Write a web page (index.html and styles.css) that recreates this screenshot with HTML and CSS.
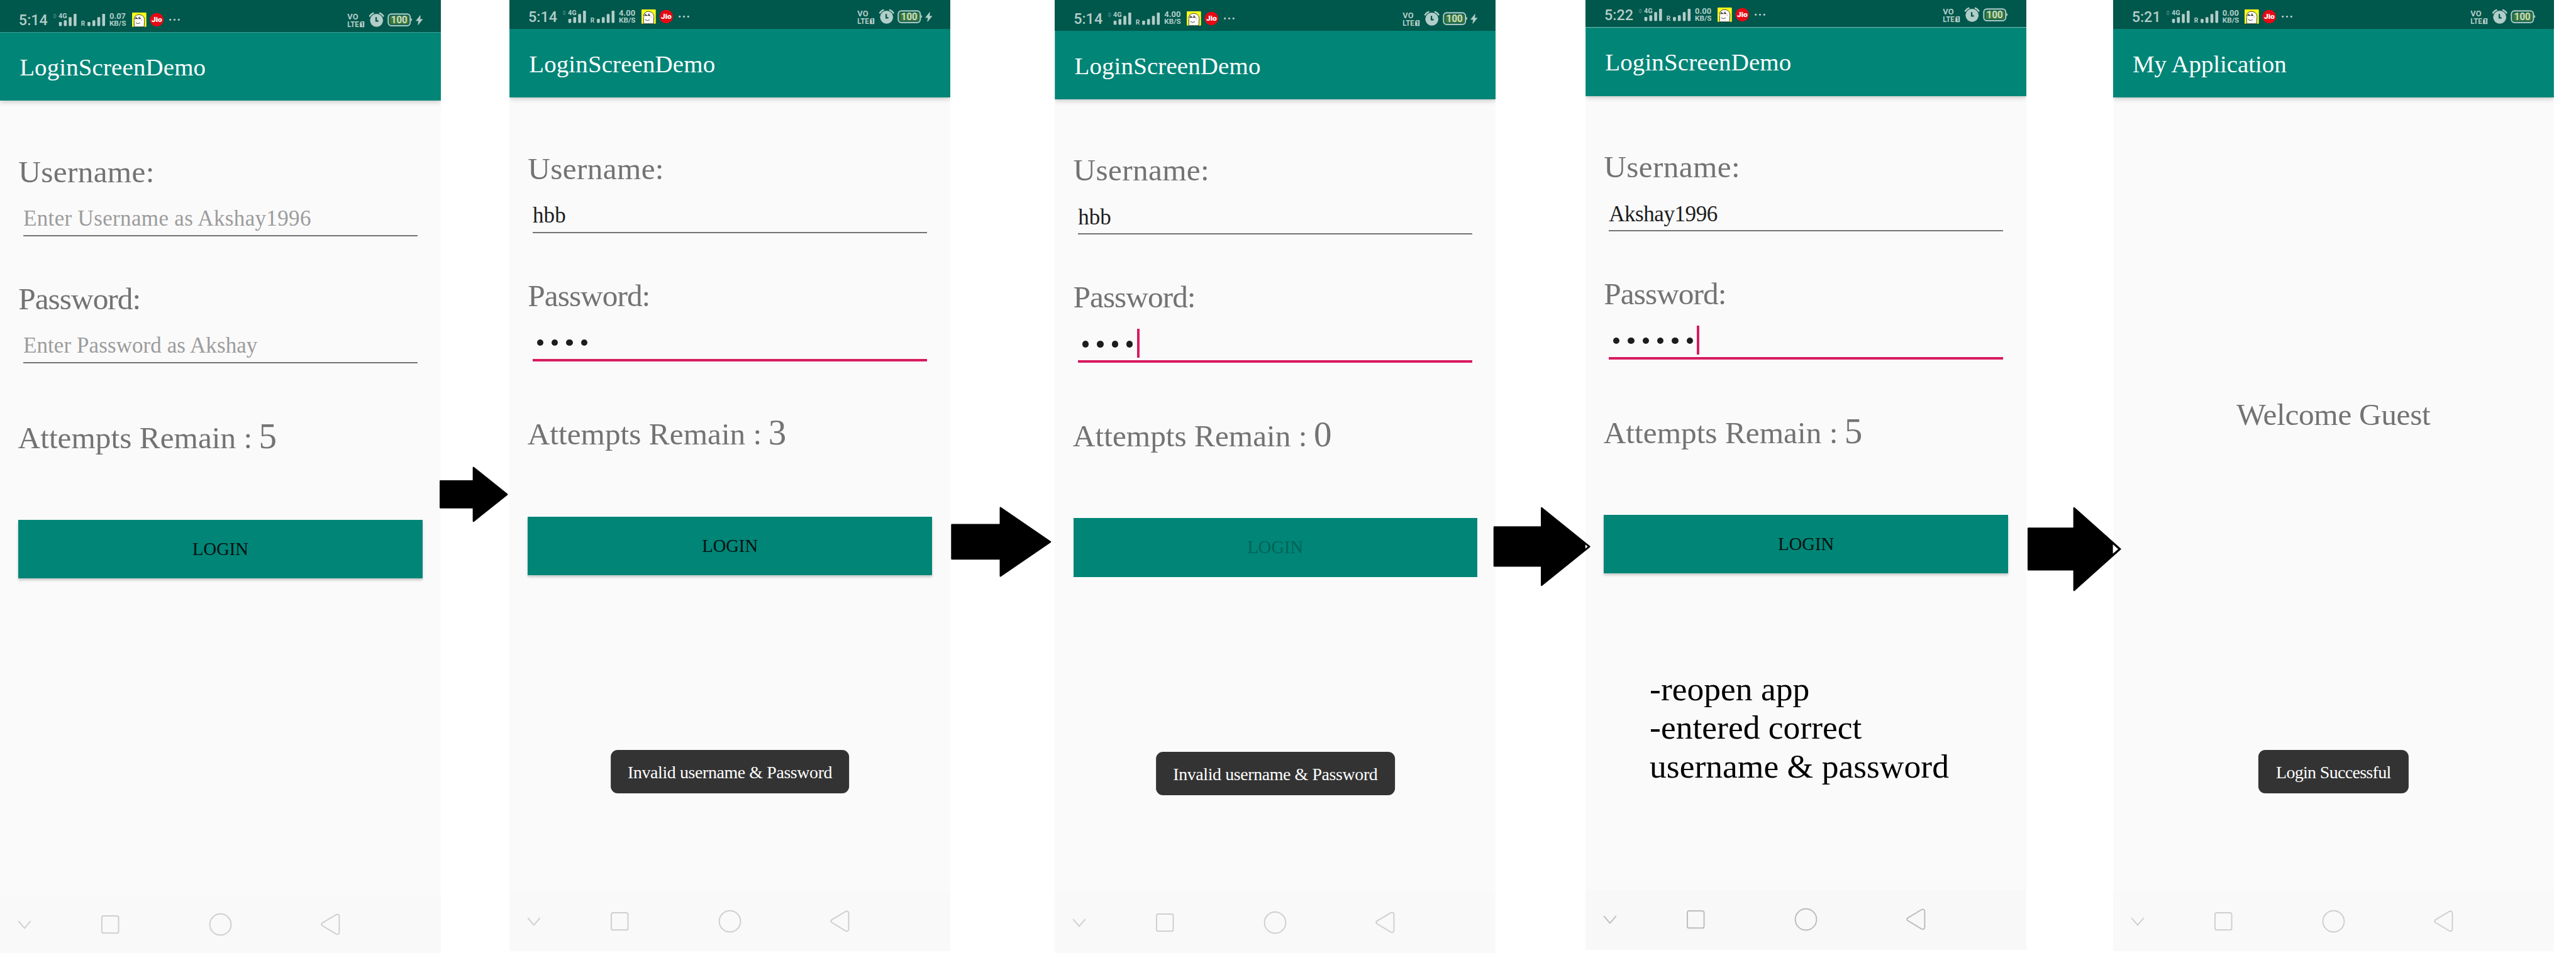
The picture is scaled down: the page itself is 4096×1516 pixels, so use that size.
FILE: index.html
```html
<!DOCTYPE html>
<html lang="en">
<head>
<meta charset="utf-8">
<title>LoginScreenDemo</title>
<link rel="stylesheet" href="styles.css">
</head>
<body>
<svg class="defs" aria-hidden="true">
  <defs>
    <g id="signal">
      <path class="dim" d="M134 33.500l5 5h-10zM134 45.500l-5-5h10z"/>
      <rect x="144" y="54" width="7" height="10" rx="2"/><rect x="156" y="50" width="7" height="14" rx="2"/>
      <rect x="168" y="42" width="7" height="22" rx="2"/><rect x="180" y="34" width="7" height="30" rx="2"/>
      <rect x="214" y="54" width="7" height="10" rx="2"/><rect x="226" y="50" width="7" height="14" rx="2"/>
      <rect x="238" y="42" width="7" height="22" rx="2"/><rect x="250" y="34" width="7" height="30" rx="2"/>
    </g>
    <g id="apps">
      <rect x="323" y="31" width="35" height="35" rx="1.500" fill="#fcfc1c"/>
      <path d="M328 66V52C327 41 332 36.200 340 36.200S353.500 41 353.500 49L352.500 66z" fill="#fff" stroke="#111" stroke-width="1.200"/>
      <circle cx="329.500" cy="49" r="1.800" fill="#f9cfcf"/><circle cx="346.500" cy="49.500" r="1.800" fill="#f9b5b5"/>
      <path d="M330 46q3-4 6.500 0zM338 46q3-4 6.500 0zM331 43l3-1M338.500 43l4-1.500M332 56q5 4.500 11 .3" fill="none" stroke="#111" stroke-width="1.200"/>
      <path d="M333 44h2.500v2h-2.500zM341 44h2.500v2h-2.500z" fill="#111"/>
      <circle cx="383.500" cy="48.500" r="16.500" fill="#e60914"/>
      <circle cx="416.500" cy="48.500" r="2.500"/><circle cx="427" cy="48.500" r="2.500"/><circle cx="437.500" cy="48.500" r="2.500"/>
    </g>
    <g id="system">
      <path d="M885 52.500h8v14.500h-11v-11z"/>
      <circle cx="923" cy="50" r="16"/>
      <path d="M906.500 39.500q3-4.500 8.500-7M939.500 39.500q-3-4.500-8.500-7" fill="none" stroke="#b2cdc9" stroke-width="3.800" stroke-linecap="round"/>
      <path d="M922 42v9.500h5.500" fill="none" stroke="#00574b" stroke-width="3.500"/>
      <rect x="951.700" y="34.700" width="53.600" height="28.600" rx="7.500" fill="none" stroke="#a6c5c0" stroke-width="3.400"/>
      <path d="M1007 45q3 0 3 3.500t-3 3.500z"/>
      <rect x="956" y="39" width="45.500" height="20" rx="2" fill="#3f7a38"/>
    </g>
    <path id="bolt" d="M1029.500 38l-.8 9.500h6.300l-11 13.500 1.300-10h-6.300z" stroke="#b2cdc9" stroke-linejoin="round"/>
    <g id="nav">
      <path d="M45 2257l15 17.500 15-17.500"/>
      <rect x="249.500" y="2244.500" width="41" height="42" rx="4.500"/>
      <circle cx="540" cy="2265.500" r="26"/>
      <path d="M789 2262l34-20.500q8-3 8 4v39q0 7-8 4l-34-20.500q-3-3 0-6z"/>
    </g>
  </defs>
</svg>

<main class="flow">
  <section class="phone">
    <header class="status">
      <span class="time">5:14</span>
      <svg class="i-signal" viewBox="129 31 139 48"><use href="#signal"/><text class="net" x="143" y="45.500" textLength="21" lengthAdjust="spacingAndGlyphs">4G</text><text class="net" x="198" y="64" textLength="10" lengthAdjust="spacingAndGlyphs">R</text></svg>
      <span class="speed">0.07<small>KB/S</small></span>
      <svg class="i-apps" viewBox="323 31 120 48"><use href="#apps"/><text class="jio" x="370.800" y="54" textLength="26" lengthAdjust="spacingAndGlyphs">Jio</text></svg>
      <svg class="i-system" viewBox="851 31 161 48"><use href="#system"/><text class="vo" x="851.500" y="47.700" textLength="26.500" lengthAdjust="spacingAndGlyphs">VO</text><text class="vo" x="851.500" y="66.500" textLength="28.500" lengthAdjust="spacingAndGlyphs">LTE</text><text class="cut" x="884" y="64.500">1</text><text class="charge" x="958.500" y="57.600" textLength="40" lengthAdjust="spacingAndGlyphs">100</text></svg>
      <svg class="i-bolt" viewBox="1012 31 24 48"><use href="#bolt"/></svg>
    </header>
    <h1 class="appbar">LoginScreenDemo</h1>
    <div class="form">
      <div class="label user">Username:</div>
      <div class="field"><span class="hint">Enter Username as Akshay1996</span></div>
      <div class="label pass">Password:</div>
      <div class="field"><span class="hint tight">Enter Password as Akshay</span></div>
      <div class="attempts"><span>Attempts Remain :</span><b>5</b></div>
      <div class="button">LOGIN</div>
    </div>
    <svg class="nav" viewBox="0 2192 1080 147"><use href="#nav"/></svg>
  </section>

  <svg class="arrow gap-1" viewBox="1080 0 168 2335"><path d="M1079 1179h81v-33l82 65.500-82 65.500v-33h-81z"/></svg>

  <section class="phone up-8">
    <header class="status">
      <span class="time">5:14</span>
      <svg class="i-signal" viewBox="129 31 139 48"><use href="#signal"/><text class="net" x="143" y="45.500" textLength="21" lengthAdjust="spacingAndGlyphs">4G</text><text class="net" x="198" y="64" textLength="10" lengthAdjust="spacingAndGlyphs">R</text></svg>
      <span class="speed">4.00<small>KB/S</small></span>
      <svg class="i-apps" viewBox="323 31 120 48"><use href="#apps"/><text class="jio" x="370.800" y="54" textLength="26" lengthAdjust="spacingAndGlyphs">Jio</text></svg>
      <svg class="i-system" viewBox="851 31 161 48"><use href="#system"/><text class="vo" x="851.500" y="47.700" textLength="26.500" lengthAdjust="spacingAndGlyphs">VO</text><text class="vo" x="851.500" y="66.500" textLength="28.500" lengthAdjust="spacingAndGlyphs">LTE</text><text class="cut" x="884" y="64.500">1</text><text class="charge" x="958.500" y="57.600" textLength="40" lengthAdjust="spacingAndGlyphs">100</text></svg>
      <svg class="i-bolt" viewBox="1012 31 24 48"><use href="#bolt"/></svg>
    </header>
    <h1 class="appbar">LoginScreenDemo</h1>
    <div class="form">
      <div class="label user">Username:</div>
      <div class="field"><span>hbb</span></div>
      <div class="label pass">Password:</div>
      <div class="field focus"><i></i><i></i><i></i><i></i></div>
      <div class="attempts"><span>Attempts Remain :</span><b>3</b></div>
      <div class="button">LOGIN</div>
    </div>
    <div class="toast">Invalid username &amp; Password</div>
    <svg class="nav" viewBox="0 2192 1080 147"><use href="#nav"/></svg>
  </section>

  <svg class="arrow gap-2" viewBox="2328 0 256 2335"><path d="M2332 1286h119v-41.500l122 83.500-122 83.500v-42h-119z"/></svg>

  <section class="phone up-4">
    <header class="status">
      <span class="time">5:14</span>
      <svg class="i-signal" viewBox="129 31 139 48"><use href="#signal"/><text class="net" x="143" y="45.500" textLength="21" lengthAdjust="spacingAndGlyphs">4G</text><text class="net" x="198" y="64" textLength="10" lengthAdjust="spacingAndGlyphs">R</text></svg>
      <span class="speed">4.00<small>KB/S</small></span>
      <svg class="i-apps" viewBox="323 31 120 48"><use href="#apps"/><text class="jio" x="370.800" y="54" textLength="26" lengthAdjust="spacingAndGlyphs">Jio</text></svg>
      <svg class="i-system" viewBox="851 31 161 48"><use href="#system"/><text class="vo" x="851.500" y="47.700" textLength="26.500" lengthAdjust="spacingAndGlyphs">VO</text><text class="vo" x="851.500" y="66.500" textLength="28.500" lengthAdjust="spacingAndGlyphs">LTE</text><text class="cut" x="884" y="64.500">1</text><text class="charge" x="958.500" y="57.600" textLength="40" lengthAdjust="spacingAndGlyphs">100</text></svg>
      <svg class="i-bolt" viewBox="1012 31 24 48"><use href="#bolt"/></svg>
    </header>
    <h1 class="appbar">LoginScreenDemo</h1>
    <div class="form">
      <div class="label user">Username:</div>
      <div class="field"><span>hbb</span></div>
      <div class="label pass">Password:</div>
      <div class="field focus"><i></i><i></i><i></i><i></i><em class="cursor"></em></div>
      <div class="attempts"><span>Attempts Remain :</span><b>0</b></div>
      <div class="button disabled">LOGIN</div>
    </div>
    <div class="toast">Invalid username &amp; Password</div>
    <svg class="nav" viewBox="0 2192 1080 147"><use href="#nav"/></svg>
  </section>

  <svg class="arrow gap-3" viewBox="3664 0 220 2335"><path d="M3661 1292h116v-47l117 94.500-117 94.500v-47h-116z"/><path class="tip" d="M3884 1334.500l6 5-6 5z"/></svg>

  <section class="phone up-12">
    <header class="status">
      <span class="time">5:22</span>
      <svg class="i-signal" viewBox="129 31 139 48"><use href="#signal"/><text class="net" x="143" y="45.500" textLength="21" lengthAdjust="spacingAndGlyphs">4G</text><text class="net" x="198" y="64" textLength="10" lengthAdjust="spacingAndGlyphs">R</text></svg>
      <span class="speed">0.00<small>KB/S</small></span>
      <svg class="i-apps" viewBox="323 31 120 48"><use href="#apps"/><text class="jio" x="370.800" y="54" textLength="26" lengthAdjust="spacingAndGlyphs">Jio</text></svg>
      <svg class="i-system" viewBox="851 31 161 48"><use href="#system"/><text class="vo" x="851.500" y="47.700" textLength="26.500" lengthAdjust="spacingAndGlyphs">VO</text><text class="vo" x="851.500" y="66.500" textLength="28.500" lengthAdjust="spacingAndGlyphs">LTE</text><text class="cut" x="884" y="64.500">1</text><text class="charge" x="958.500" y="57.600" textLength="40" lengthAdjust="spacingAndGlyphs">100</text></svg>
    </header>
    <h1 class="appbar">LoginScreenDemo</h1>
    <div class="form">
      <div class="label user">Username:</div>
      <div class="field"><span class="short-name">Akshay1996</span></div>
      <div class="label pass">Password:</div>
      <div class="field focus"><i></i><i></i><i></i><i></i><i></i><i></i><em class="cursor"></em></div>
      <div class="attempts"><span>Attempts Remain :</span><b>5</b></div>
      <div class="button">LOGIN</div>
      <p class="note">-reopen app<br>-entered correct<br>username &amp; password</p>
    </div>
    <svg class="nav dark" viewBox="0 2192 1080 147"><use href="#nav"/></svg>
  </section>

  <svg class="arrow gap-4" viewBox="4964 0 212 2335"><path d="M4969 1295h112v-50l113 100.500-113 101v-50.500h-112z"/><path class="tip" d="M5176 1334l13 11.500-13 11.500z"/></svg>

  <section class="phone up-8">
    <header class="status">
      <span class="time">5:21</span>
      <svg class="i-signal" viewBox="129 31 139 48"><use href="#signal"/><text class="net" x="143" y="45.500" textLength="21" lengthAdjust="spacingAndGlyphs">4G</text><text class="net" x="198" y="64" textLength="10" lengthAdjust="spacingAndGlyphs">R</text></svg>
      <span class="speed">0.00<small>KB/S</small></span>
      <svg class="i-apps" viewBox="323 31 120 48"><use href="#apps"/><text class="jio" x="370.800" y="54" textLength="26" lengthAdjust="spacingAndGlyphs">Jio</text></svg>
      <svg class="i-system" viewBox="851 31 161 48"><use href="#system"/><text class="vo" x="851.500" y="47.700" textLength="26.500" lengthAdjust="spacingAndGlyphs">VO</text><text class="vo" x="851.500" y="66.500" textLength="28.500" lengthAdjust="spacingAndGlyphs">LTE</text><text class="cut" x="884" y="64.500">1</text><text class="charge" x="958.500" y="57.600" textLength="40" lengthAdjust="spacingAndGlyphs">100</text></svg>
    </header>
    <h1 class="appbar plain">My Application</h1>
    <div class="form"><div class="welcome">Welcome Guest</div></div>
    <div class="toast short">Login Successful</div>
    <svg class="nav" viewBox="0 2192 1080 147"><use href="#nav"/></svg>
  </section>
</main>
</body>
</html>
```
FILE: styles.css
```css
/* 1rem = 100 device pixels of the phone screens */
html { font-size: 64.9129px; }
body {
  margin: 0;
  height: 1516px;
  overflow: hidden;
  background: #fff;
  font-family: "Liberation Serif", "Times New Roman", serif;
}
.defs { position: absolute; width: 0; height: 0; }
.flow { display: flex; align-items: flex-start; height: 23.39rem; }

/* phone shell */
.phone {
  --cut: 0rem;
  position: relative;
  flex: none;
  display: flex;
  flex-direction: column;
  width: 10.8rem;
  height: calc(23.39rem - var(--cut));
  background: #fafafa;
}
.up-4 { --cut: .04rem; }
.up-8 { --cut: .08rem; }
.up-12 { --cut: .12rem; }

/* status bar */
.status {
  flex: none;
  box-sizing: border-box;
  display: flex;
  align-items: flex-start;
  height: calc(.79rem - var(--cut));
  padding: calc(.31rem - var(--cut)) .44rem 0 .46rem;
  background: #00574b;
  color: #b2cdc9;
  fill: #b2cdc9;
  font-family: Roboto, sans-serif;
}
.status svg { flex: none; height: .48rem; overflow: visible; font-weight: 700; }
.time { width: .83rem; font-size: .36rem; line-height: .394rem; font-weight: 500; white-space: nowrap; }
.i-signal { width: 1.39rem; }
.speed { width: .55rem; padding-top: .015rem; font-size: .2rem; line-height: .165rem; font-weight: 700; white-space: nowrap; }
.speed small { display: block; font-size: .18rem; }
.i-apps { width: 1.2rem; }
.i-system { width: 1.61rem; margin-left: auto; }
.i-bolt { width: .24rem; }
.net { font-size: 18px; }
.vo { font-size: 20.5px; }
.dim { fill: #3b7f75; }
.jio { fill: #fff; font-size: 18px; font-weight: 900; }
.cut { fill: #00574b; font-size: 13px; }
.charge { fill: #c8dcc9; font-size: 24.5px; }

.appbar {
  flex: none;
  position: relative;
  height: 1.68rem;
  margin: 0;
  padding-left: .48rem;
  background: #008577;
  box-shadow: 0 .03rem .12rem rgba(0, 0, 0, .22);
  clip-path: inset(0 0 -.3rem 0);
  color: #fff;
  font-size: .6rem;
  font-weight: 400;
  letter-spacing: .002rem;
  line-height: 1.74rem;
}
.plain { letter-spacing: -.001rem; }

/* form */
.form { flex: 1; color: #737373; }
.label { padding-left: .45rem; font-size: .76rem; line-height: .9rem; }
.user { padding-top: 1.304rem; letter-spacing: .005rem; }
.pass { padding-top: 1.09rem; letter-spacing: -.015rem; }
.field {
  display: flex;
  align-items: center;
  box-sizing: border-box;
  width: 9.66rem;
  height: 1.12rem;
  margin-left: .57rem;
  padding: .4rem 0 .09rem;
  border-bottom: 2px solid #737373;
  color: #1d1d1d;
  font-size: .54rem;
  line-height: .6rem;
}
.hint { color: #9c9c9c; letter-spacing: .005rem; }
.tight { letter-spacing: .001rem; }
.short-name { letter-spacing: -.007rem; }
.focus {
  height: 1.15rem;
  margin-bottom: -.03rem;
  padding-left: .103rem;
  border-bottom: 4px solid #d81b60;
}
.focus i { width: .16rem; height: .16rem; margin: -.02rem .2rem 0 0; border-radius: 50%; background: #1d1d1d; }
.cursor { width: .06rem; height: .71rem; margin: -.07rem 0 0 -.1rem; background: #d81b60; }
.attempts {
  display: flex;
  align-items: baseline;
  gap: .16rem;
  margin-top: 1.29rem;
  padding-left: .44rem;
  font-size: .76rem;
  line-height: .9rem;
}
.attempts b { font-size: .88rem; font-weight: 400; line-height: 1rem; }
.button {
  width: 9.9rem;
  height: 1.44rem;
  margin: 1.544rem 0 0 .45rem;
  background: #008577;
  box-shadow: 0 .05rem .06rem rgba(0, 0, 0, .2);
  color: #05110f;
  font-size: .44rem;
  line-height: 1.46rem;
  text-align: center;
}
.disabled { box-shadow: none; color: #006358; }
.note {
  margin: 2.36rem 0 0 1.57rem;
  color: #000;
  font-size: .825rem;
  line-height: .948rem;
  white-space: nowrap;
}
.welcome { margin-top: 7.33rem; font-size: .76rem; line-height: .9rem; letter-spacing: -.005rem; text-align: center; }

/* toast floats over the screen */
.toast {
  position: absolute;
  left: 50%;
  bottom: 3.87rem;
  width: 5.85rem;
  height: 1.06rem;
  transform: translateX(-50%);
  border-radius: .17rem;
  background: #333;
  color: #fff;
  font-size: .43rem;
  letter-spacing: -.006rem;
  line-height: 1.1rem;
  text-align: center;
  white-space: nowrap;
}
.short { width: 3.67rem; letter-spacing: -.01rem; }

.nav {
  flex: none;
  width: 10.8rem;
  height: 1.47rem;
  background: #f9f9f9;
  fill: none;
  stroke: #cfcfcf;
  stroke-width: 3px;
}
.dark { background: #f8f8f8; stroke: #bdbdbd; }

/* connectors between the screens; the tips reach over the next phone */
.arrow { flex: none; position: relative; z-index: 1; height: 23.35rem; overflow: visible; stroke: #000; stroke-width: 4px; stroke-linejoin: round; }
.gap-1 { width: 1.68rem; }
.gap-2 { width: 2.56rem; }
.gap-3 { width: 2.2rem; }
.gap-4 { width: 2.12rem; }
.tip { fill: #fff; stroke: none; }
```
